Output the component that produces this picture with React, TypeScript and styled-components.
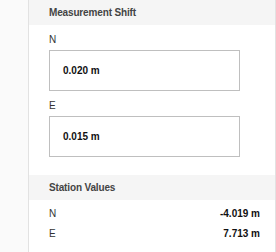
import React from 'react'
import styled, { createGlobalStyle } from 'styled-components'

const GlobalStyle = createGlobalStyle`
  html, body { margin: 0; padding: 0; background: #fafafa; }
  body { font-family: "Liberation Sans", Arial, sans-serif; }
`

const shift = [
  { axis: 'N', value: '0.020 m' },
  { axis: 'E', value: '0.015 m' },
]

const station = [
  { axis: 'N', value: '-4.019 m' },
  { axis: 'E', value: '7.713 m' },
]

export default function App() {
  return (
    <>
      <GlobalStyle />
      <Layout>
        <Gutter />
        <Panel>
          <SectionHeader>Measurement Shift</SectionHeader>
          <Fields>
            {shift.map((f) => (
              <Field key={f.axis}>
                <FieldLabel>{f.axis}</FieldLabel>
                <ValueBox>{f.value}</ValueBox>
              </Field>
            ))}
          </Fields>
          <SectionHeader>Station Values</SectionHeader>
          <Rows>
            {station.map((r) => (
              <Row key={r.axis}>
                <RowLabel>{r.axis}</RowLabel>
                <RowValue>{r.value}</RowValue>
              </Row>
            ))}
          </Rows>
        </Panel>
      </Layout>
    </>
  )
}

const Layout = styled.div`
  display: flex;
  width: 276px;
  height: 252px;
  overflow: hidden;
`

const Gutter = styled.div`
  width: 28px;
  flex: none;
  background: #fafafa;
`

const Panel = styled.div`
  box-sizing: border-box;
  width: 248px;
  flex: none;
  background: #fff;
  border-left: 1px solid #e2e2e2;
  border-right: 1px solid #e2e2e2;
`

const SectionHeader = styled.div`
  height: 25px;
  line-height: 26px;
  padding-left: 20px;
  background: #f5f5f5;
  color: #444;
  font-size: 10px;
  font-weight: 700;
  letter-spacing: -0.15px;
`

const Fields = styled.div`
  padding: 0 20px 18px;
  display: flex;
  flex-direction: column;
`

const Field = styled.div`
  padding-top: 8px;
`

const FieldLabel = styled.div`
  font-size: 10px;
  line-height: 13px;
  color: #333;
  margin-bottom: 4px;
`

const ValueBox = styled.div`
  box-sizing: border-box;
  width: 191px;
  height: 41px;
  border: 1px solid #bfbfbf;
  padding-left: 13px;
  line-height: 39px;
  font-size: 10px;
  font-weight: 700;
  color: #111;
`

const Rows = styled.div`
  padding: 4px 0 0 20px;
`

const Row = styled.div`
  display: flex;
  justify-content: space-between;
  width: 211px;
  height: 20px;
  line-height: 20px;
  font-size: 10px;
`

const RowLabel = styled.span`
  color: #333;
`

const RowValue = styled.span`
  color: #111;
  font-weight: 700;
`
